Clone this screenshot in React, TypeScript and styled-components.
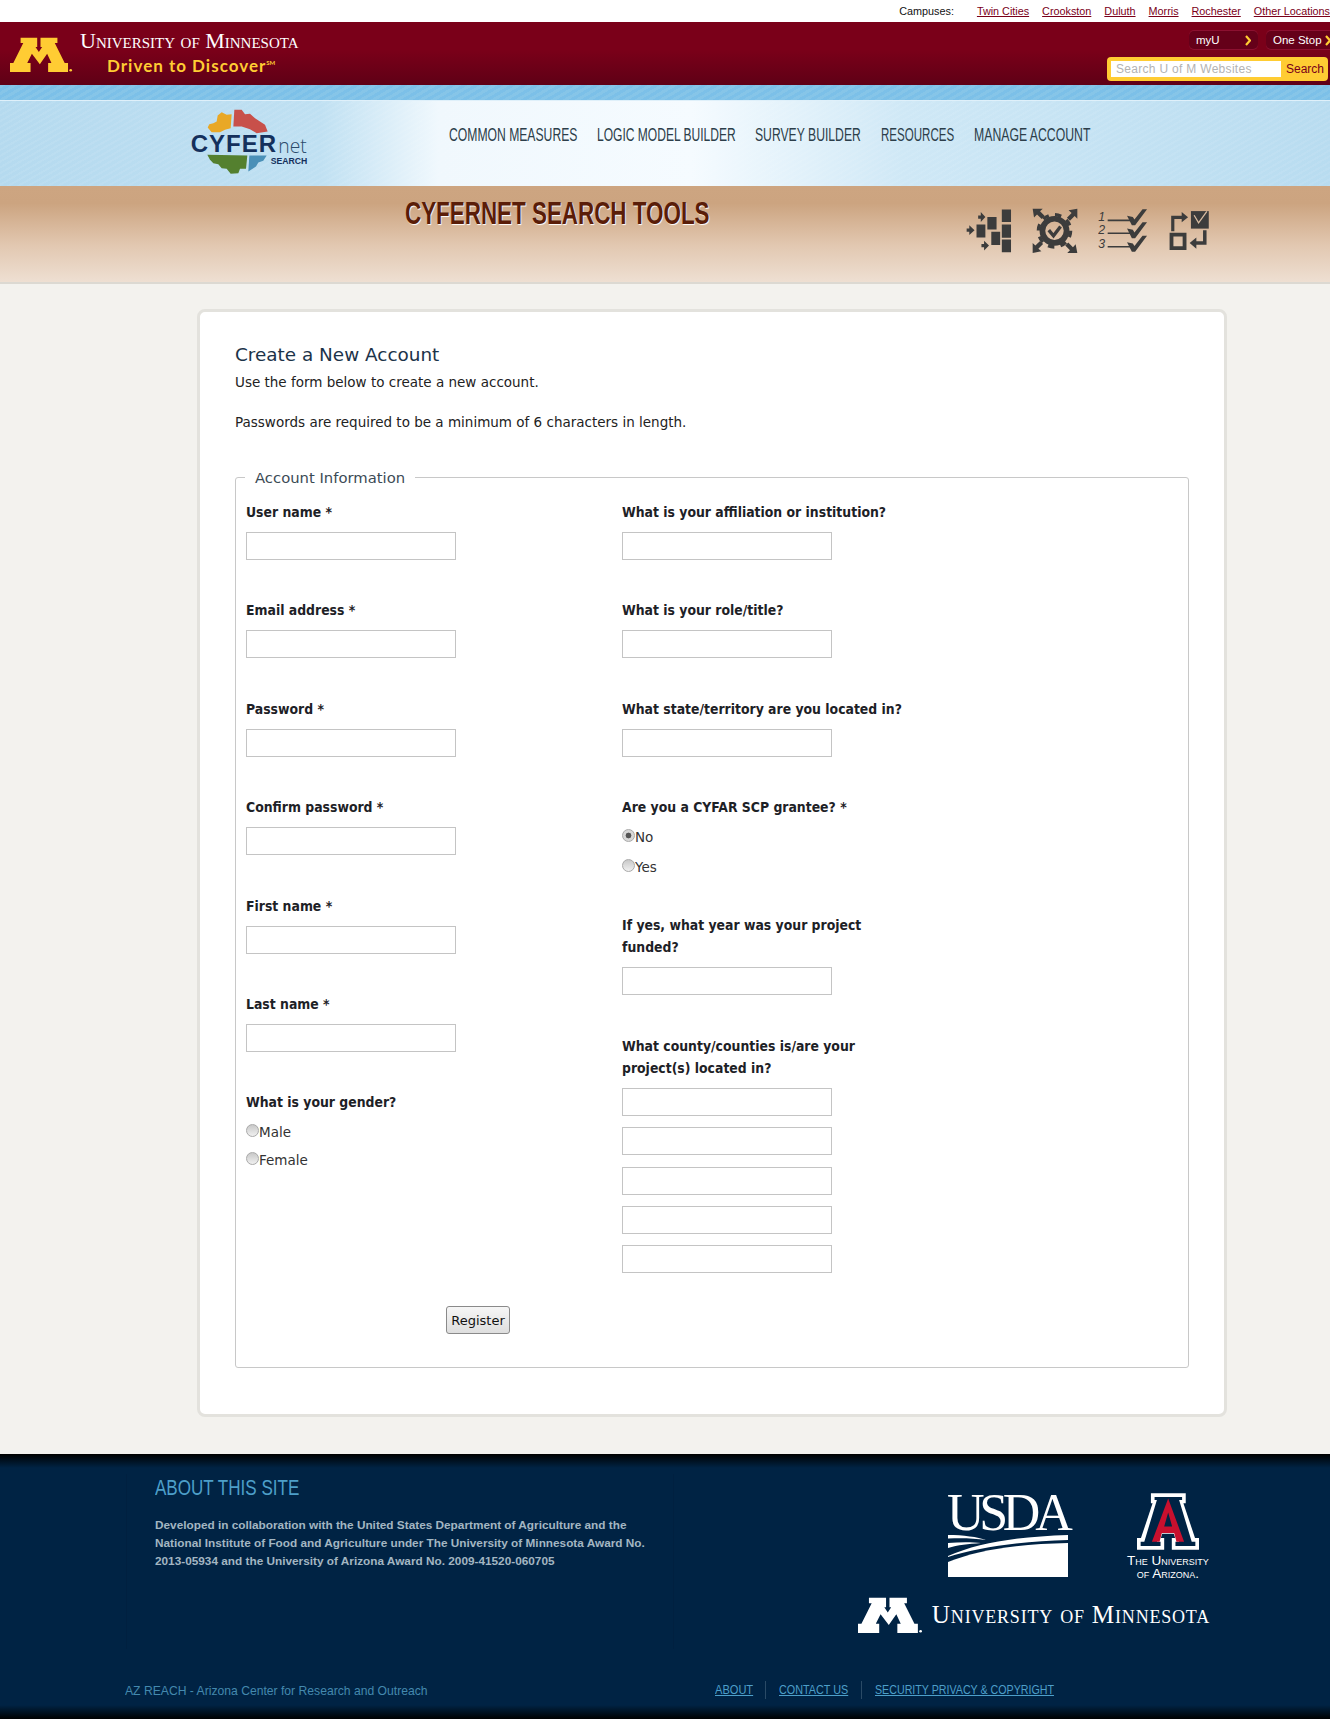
import React from "react"
import styled, { createGlobalStyle } from "styled-components"

const GlobalStyle = createGlobalStyle`
  html, body { margin: 0; padding: 0; background: #f3f2ee; }
  body { font-family: "DejaVu Sans", sans-serif; color: #1d2b36; }
  * { box-sizing: border-box; }
`

const sans = `"Liberation Sans", sans-serif`
const body = `"DejaVu Sans", "Open Sans", sans-serif`
const bodyBold = `"DejaVu Sans Condensed", "Open Sans", sans-serif`
const serif = `"Liberation Serif", serif`

// condensed DIN look: no narrow family is installed, so text gets squeezed
const Squeeze = styled.span<{ $w: number; $s: number }>`
  display: inline-block;
  width: ${p => p.$w}px;
  white-space: nowrap;
  transform: scaleX(${p => p.$s});
  transform-origin: left center;
`

/* top strip */
const CampusBar = styled.div`
  height: 22px;
  background: #fff;
  display: flex;
  justify-content: flex-end;
  align-items: center;
  overflow: hidden;
  white-space: nowrap;
  font-family: ${sans};
  font-size: 10.8px;
`
const CampusLabel = styled.span`
  color: #111;
  margin-right: 23px;
`
const CampusLink = styled.a`
  color: #7a0019;
  text-decoration: underline;
  margin-left: 13px;
  &:first-of-type { margin-left: 0; }
`

/* maroon */
const Maroon = styled.div`
  height: 63px;
  background: linear-gradient(#7a0019 0%, #7a0019 45%, #5f0016 100%);
  display: flex;
  justify-content: space-between;
  overflow: hidden;
`
const Brand = styled.div`
  display: flex;
  padding: 15px 0 0 10px;
`
const BrandText = styled.div`
  margin-left: 7px;
  margin-top: -8px;
`
const UmnName = styled.div`
  font-family: ${serif};
  font-variant: small-caps;
  color: #fff;
  font-size: 22px;
  line-height: 24px;
  white-space: nowrap;
`
const Tagline = styled.div`
  font-family: "Lato", sans-serif;
  font-weight: 700;
  color: #ffcc33;
  font-size: 17px;
  letter-spacing: 1px;
  line-height: 22px;
  margin: 2px 0 0 27px;
  white-space: nowrap;
  sup { font-size: 6px; vertical-align: 7px; line-height: 0; letter-spacing: 0; }
`
const UmnTools = styled.div`
  width: 223px;
  flex-shrink: 0;
  padding-top: 9px;
`
const QuickLinks = styled.div`
  display: flex;
  gap: 8px;
  padding-left: 82px;
`
const QuickLink = styled.a<{ $wide?: boolean }>`
  display: flex;
  justify-content: space-between;
  align-items: center;
  flex-shrink: 0;
  width: ${p => (p.$wide ? "70px" : "69px")};
  height: 18px;
  padding: 0 ${p => (p.$wide ? "5px" : "7px")} 0 7px;
  border-radius: 5px;
  background: #650019;
  box-shadow: 0 -1px 0 #8c1030, 0 1px 0 #8c1030;
  color: #fff;
  font-family: ${sans};
  font-size: 11.5px;
  white-space: nowrap;
`
const Chevron = styled.svg`
  width: 6px;
  height: 11px;
  flex-shrink: 0;
`
const SearchBox = styled.div`
  display: flex;
  align-items: center;
  height: 24px;
  width: 221px;
  margin-top: 8px;
  padding-left: 4px;
  background: #ffcc33;
  border-radius: 4px;
`
const SearchField = styled.div`
  width: 170px;
  height: 16px;
  background: #fff;
  color: #b3b3b3;
  font-family: ${sans};
  font-size: 12px;
  line-height: 16px;
  padding-left: 5px;
  letter-spacing: 0.3px;
  white-space: nowrap;
`
const SearchGo = styled.span`
  margin-left: 5px;
  color: #7a0019;
  font-family: ${sans};
  font-size: 12px;
`

const BlueStrip = styled.div`
  height: 16px;
  background: repeating-linear-gradient(-30deg, #7cc0e8 0 3px, #86c5e8 3px 6px);
  border-bottom: 1px solid #dff0fa;
`

/* site nav */
const SiteNav = styled.div`
  height: 85px;
  display: flex;
  background:
    repeating-linear-gradient(-30deg, rgba(255,255,255,0.07) 0 2px, rgba(255,255,255,0) 2px 5px),
    linear-gradient(90deg, #b5daef 0%, #bfe0f2 24%, #f0f8fd 33%, #f5fbff 52%, #cfe8f6 68%, #b8dcf0 100%);
  box-shadow: 0 1px 0 #d8d4cc;
`
const LogoWrap = styled.div`
  width: 120px;
  margin-left: 190px;
  padding-top: 7px;
  flex-shrink: 0;
`
const NavLinks = styled.nav`
  display: flex;
  gap: 19.6px;
  margin-left: 139px;
  padding-top: 24px;
`
const NavLink = styled(Squeeze)`
  font-family: ${sans};
  font-size: 17.5px;
  color: #2c3e4a;
  line-height: 20px;
  height: 20px;
`

/* tan band */
const ToolBand = styled.div`
  height: 98px;
  background: linear-gradient(#cda581 0%, #cca480 18%, #e2c8b1 62%, #eedfd2 100%);
  border-bottom: 2px solid #dcd9d2;
  display: flex;
`
const BandTitle = styled.h1`
  margin: 9px 0 0 405px;
  height: 36px;
  font-family: ${sans};
  font-weight: 700;
  font-size: 32px;
  line-height: 36px;
  color: #5a1d08;
  text-shadow: 1px 1px 1px #fff;
  white-space: nowrap;
`
const BandIcons = styled.div`
  display: flex;
  margin-left: 255px;
  padding-top: 22px;
  gap: 20px;
`
const BandIcon = styled.svg`
  height: 46px;
  fill: #3c3c3c;
`

/* card */
const Main = styled.main`
  height: 1170px;
  padding: 25px 103px 0 197px;
`
const Card = styled.div`
  height: 1108px;
  background: #fff;
  border: 3px solid #e3e2dd;
  border-radius: 8px;
  padding: 29px 35px 0 35px;
`
const PageTitle = styled.h2`
  margin: 0;
  font-family: ${body};
  font-weight: 400;
  font-size: 18.4px;
  line-height: 28px;
  color: #1c3349;
`
const Intro = styled.p`
  margin: 2.6px 0 0;
  font-family: ${body};
  font-size: 13.5px;
  line-height: 20px;
  color: #222;
`
const Passwords = styled(Intro)`
  margin-top: 20.4px;
`
const Fieldset = styled.fieldset`
  margin: 36px 0 0;
  height: 900px;
  padding: 0 10px;
  border: 1px solid #c8c8c8;
  border-radius: 3px;
`
const Legend = styled.legend`
  margin-left: -1px;
  padding: 0 10px;
  font-family: ${body};
  font-size: 14.8px;
  line-height: 20px;
  color: #3b4a55;
`
const Columns = styled.div`
  display: flex;
  margin-top: 13px;
`
const Column = styled.div<{ $width: number }>`
  width: ${p => p.$width}px;
  flex-shrink: 0;
`
const Field = styled.div<{ $after?: number }>`
  margin-bottom: ${p => p.$after ?? 39.4}px;
`
const Label = styled.label`
  display: block;
  font-family: ${bodyBold};
  font-weight: 700;
  font-size: 13.85px;
  line-height: 22px;
  color: #1d2126;
  margin-bottom: 9px;
`
const TextInput = styled.input`
  display: block;
  width: 210px;
  height: 28px;
  padding: 0 4px;
  border: 1px solid #c4c4c4;
  background: #fff;
  outline: none;
`
const StackInput = styled(TextInput)`
  margin-bottom: 11.4px;
`
const RadioRow = styled.label<{ $after: number }>`
  display: flex;
  align-items: center;
  height: 20px;
  margin-bottom: ${p => p.$after}px;
  font-family: ${body};
  font-size: 13.5px;
  color: #333;
`
const RadioDot = styled.span<{ $on?: boolean }>`
  width: 13px;
  height: 13px;
  border-radius: 50%;
  margin-top: -3px;
  border: 1px solid #a9a9a9;
  background: ${p =>
    p.$on
      ? "radial-gradient(circle, #555 0 2.6px, #d8d8d8 3.2px)"
      : "linear-gradient(#c8c8c8, #f0f0f0)"};
`
const RegisterRow = styled.div`
  margin: 33px 0 0 200px;
`
const RegisterButton = styled.button`
  width: 64px;
  height: 28px;
  padding: 0;
  font-family: ${body};
  font-size: 13px;
  color: #111;
  background: linear-gradient(#f6f6f6, #dedede);
  border: 1px solid #8a8a8a;
  border-radius: 3px;
`

/* footer */
const Footer = styled.footer`
  height: 265px;
  background:
    linear-gradient(#000 0, rgba(0,0,0,0) 14px),
    linear-gradient(0deg, #000 0, rgba(0,0,0,0) 14px),
    #002344;
  display: flex;
  flex-direction: column;
`
const FooterTop = styled.div`
  height: 218px;
  display: flex;
  justify-content: space-between;
  padding: 0 120px 0 126px;
`
const AboutPanel = styled.div`
  width: 548px;
  height: 175px;
  margin-top: 20px;
  padding: 1px 0 0 28px;
  border-left: 1px solid #002040;
  border-right: 1px solid #002040;
`
const AboutTitle = styled.h3`
  margin: 0 0 15px;
  font-family: ${sans};
  font-weight: 400;
  font-size: 22px;
  line-height: 26px;
  color: #4d9fc9;
`
const AboutText = styled.p`
  margin: 0;
  font-family: ${sans};
  font-weight: 700;
  font-size: 11.8px;
  line-height: 18px;
  color: #a3b6c2;
  white-space: nowrap;
`
const FooterLogos = styled.div`
  width: 350px;
  padding-top: 39px;
  display: flex;
  flex-direction: column;
  align-items: flex-end;
`
const LogoRow = styled.div`
  display: flex;
  align-items: flex-start;
`
const UsdaMark = styled.div`
  width: 120px;
  margin-right: 58px;
  margin-top: 2px;
`
const UsdaWord = styled.div`
  font-family: ${serif};
  color: #fff;
  font-size: 52px;
  line-height: 36px;
  letter-spacing: -5.3px;
  margin-left: -1px;
  height: 40px;
  white-space: nowrap;
`
const WaveArt = styled.svg`
  display: block;
`
const ArizonaMark = styled.div`
  width: 84px;
  display: flex;
  flex-direction: column;
  align-items: center;
  font-family: ${sans};
  font-variant: small-caps;
  color: #fff;
  font-size: 13.5px;
  line-height: 12.5px;
  white-space: nowrap;
`
const ArizonaArt = styled.svg`
  margin-bottom: 5px;
`
const UmnFoot = styled.div`
  display: flex;
  align-items: center;
  margin-top: 17px;
`
const UmnFootName = styled.div`
  font-family: ${serif};
  font-variant: small-caps;
  color: #fff;
  font-size: 25.2px;
  letter-spacing: 0.8px;
  margin-left: 9px;
  white-space: nowrap;
`
const FooterBottom = styled.div`
  display: flex;
  padding: 9px 0 0 125px;
  align-items: center;
`
const AzReach = styled.div`
  width: 590px;
  color: #4489ae;
  font-family: ${sans};
  font-size: 13.5px;
`
const FootLink = styled.a`
  color: #4d9fc9;
  font-family: ${sans};
  font-size: 13.5px;
  padding: 0 13px;
  line-height: 18px;
  border-right: 1px solid #2a4a66;
  &:last-child { border-right: 0; }
  &:first-of-type { padding-left: 0; }
`
const FootLinkText = styled(Squeeze)`
  text-decoration: underline;
`

/* drawings */
const BlockM = ({ fill, width, height }: { fill: string; width: number; height: number }) => (
  <svg width={width} height={height} viewBox="0 0 190 105" style={{ flexShrink: 0 }}>
    <path
      fill={fill}
      d="M32 2H82V30H77L87 45L97 30H92V2H143V18H135L165 78H175V105H115V78H125L112 50L90 82L66 50L52 78H62V105H0V78H10L40 18H32Z"
    />
    <circle cx="183" cy="100" r="4" fill={fill} />
  </svg>
)

const CyferLogo = () => (
  <svg width="120" height="67" viewBox="60 40 360 200">
    <path fill="#e9a826" d="M113 98L118 88L130 85L140 80L143 62L155 52L170 60L185 58L182 100L165 105L150 112L125 112Z" />
    <path fill="#c8504a" d="M190 95L193 45L215 45L225 58L240 57L255 70L270 80L285 90L293 110L260 115L240 103L215 95Z" />
    <path fill="#54802f" d="M112 180L232 182L228 222L210 222L205 235L182 237L170 222L155 220L145 208L130 205L120 195Z" />
    <path fill="#4a90b8" d="M238 182L290 182L280 198L265 203L258 215L235 230Z" />
    <text x="62" y="172" fontFamily="'Liberation Sans', sans-serif" fontWeight="700" fontSize="72" letterSpacing="3" fill="#14305c">CYFER</text>
    <text x="325" y="175" fontFamily="'Open Sans', sans-serif" fontWeight="300" fontSize="58" fill="#2b4a6a">net</text>
    <text x="302" y="208" fontFamily="'Liberation Sans', sans-serif" fontWeight="700" fontSize="26" fill="#14305c">SEARCH</text>
  </svg>
)

const ArizonaA = () => (
  <ArizonaArt width="62" height="57" viewBox="0 0 187 170">
    <path fill="#fff" d="M42 0H147V30H140L175 135H187V170H105V135H115L111 122H76L72 135H82V170H0V135H12L47 30H42Z" />
    <path fill="#002344" d="M53 11H136V20H127L165 146H176V159H116V146H127L119 111H68L60 146H71V159H11V146H22L60 20H53Z" />
    <path fill="#c8102e" fillRule="evenodd" d="M94 16L142 146H119L112 120H75L68 146H45ZM94 58L82 100H106Z" />
  </ArizonaArt>
)

const Wave = () => (
  <WaveArt width="120" height="42" viewBox="0 0 120 42">
    <path fill="#fff" d="M0 0C15 0 30 2 38 5 25 3 12 3 0 3.5Z" />
    <path fill="#fff" d="M0 8C12 7 24 7 33 8 20 9 10 10 0 13Z" />
    <path fill="#fff" d="M0 21C30 8 70 1.500 120 0V5C75 6 30 12 0 22Z" />
    <path fill="#fff" d="M0 42V27C30 15 70 9 120 8V42Z" />
  </WaveArt>
)

const ChevronIcon = () => (
  <Chevron viewBox="0 0 6 11">
    <path d="M1 1L5 5.500L1 10" fill="none" stroke="#ffcc33" strokeWidth="2.200" />
  </Chevron>
)

const BlocksIcon = () => (
  <BandIcon width="46" viewBox="48 40 140 135">
    <path d="M157 42h28v38h-28zM157 88h28v40h-28zM157 133h28v39h-28zM113 65h28v38h-28zM125 110h27v40h-27zM80 88h27v39H80z" />
    <path d="M85 60h8V50l14 15-14 15V70h-8zM50 100h8V90l16 15-16 15v-10h-8zM95 147h8v-10l15 15-15 15v-10h-8z" />
  </BandIcon>
)

const GearIcon = () => (
  <BandIcon width="46" viewBox="245 40 137 133">
    <circle cx="312" cy="106" r="36" fill="none" stroke="#3c3c3c" strokeWidth="17" />
    <circle cx="312" cy="106" r="48" fill="none" stroke="#3c3c3c" strokeWidth="10" strokeDasharray="19 18.700" />
    <path d="M295 104l14 17 21-28" fill="none" stroke="#3c3c3c" strokeWidth="10" />
    <path d="M247 40h30l-8 8 14 14-9 9-14-14-9 9zM380 40v30l-8-8-14 14-9-9 14-14-9-8zM247 172v-30l8 8 14-14 9 9-14 14 9 8zM380 172h-30l8-8-14-14 9-9 14 14 8-9z" />
  </BandIcon>
)

const ListIcon = () => (
  <BandIcon width="50" viewBox="440 40 155 135">
    <text x="441" y="76" fontFamily="'Liberation Sans', sans-serif" fontStyle="italic" fontSize="38">1</text>
    <text x="441" y="118" fontFamily="'Liberation Sans', sans-serif" fontStyle="italic" fontSize="38">2</text>
    <text x="441" y="160" fontFamily="'Liberation Sans', sans-serif" fontStyle="italic" fontSize="38">3</text>
    <path d="M470 72h75v5h-75zM470 112h75v5h-75zM470 154h75v5h-75z" />
    <path d="M530 60L548 64L553 72L578 40H592L555 90H545Z" />
    <path d="M530 100L548 104L553 112L578 80H592L555 130H545Z" />
    <path d="M530 142L548 146L553 154L578 122H592L555 172H545Z" />
  </BandIcon>
)

const FlowIcon = () => (
  <BandIcon width="43" viewBox="650 40 135 135">
    <path d="M722 45h56v55h-56z" />
    <path d="M732 58l14 24 26-36" fill="none" stroke="#d9bda3" strokeWidth="4" />
    <path fillRule="evenodd" d="M655 113h53v54h-53zM667 125v30h29v-30z" />
    <path d="M660 108V60h33V48l20 16-20 16V70h-23v38zM760 105h11v46h-32v12l-21-18 21-17v12h21z" />
  </BandIcon>
)

const leftFields = ["User name *", "Email address *", "Password *", "Confirm password *", "First name *", "Last name *"]
const rightFields = ["What is your affiliation or institution?", "What is your role/title?", "What state/territory are you located in?"]
const campuses = ["Twin Cities", "Crookston", "Duluth", "Morris", "Rochester", "Other Locations"]
const navItems = [
  { label: "COMMON MEASURES", w: 128, s: 0.695 },
  { label: "LOGIC MODEL BUILDER", w: 139, s: 0.688 },
  { label: "SURVEY BUILDER", w: 106, s: 0.696 },
  { label: "RESOURCES", w: 74, s: 0.66 },
  { label: "MANAGE ACCOUNT", w: 116, s: 0.7 },
]
const footLinks = [
  { label: "ABOUT", w: 37, s: 0.82 },
  { label: "CONTACT US", w: 69, s: 0.8 },
  { label: "SECURITY PRIVACY & COPYRIGHT", w: 179, s: 0.79 },
]

export default function App() {
  return (
    <>
      <GlobalStyle />
      <CampusBar>
        <CampusLabel>Campuses:</CampusLabel>
        {campuses.map(c => <CampusLink key={c}>{c}</CampusLink>)}
      </CampusBar>

      <Maroon>
        <Brand>
          <BlockM fill="#ffcc33" width={63} height={35} />
          <BrandText>
            <UmnName>University of Minnesota</UmnName>
            <Tagline>Driven to Discover<sup>SM</sup></Tagline>
          </BrandText>
        </Brand>
        <UmnTools>
          <QuickLinks>
            <QuickLink>myU <ChevronIcon /></QuickLink>
            <QuickLink $wide>One Stop <ChevronIcon /></QuickLink>
          </QuickLinks>
          <SearchBox>
            <SearchField>Search U of M Websites</SearchField>
            <SearchGo>Search</SearchGo>
          </SearchBox>
        </UmnTools>
      </Maroon>
      <BlueStrip />

      <SiteNav>
        <LogoWrap><CyferLogo /></LogoWrap>
        <NavLinks>
          {navItems.map(n => <NavLink key={n.label} $w={n.w} $s={n.s}>{n.label}</NavLink>)}
        </NavLinks>
      </SiteNav>

      <ToolBand>
        <BandTitle><Squeeze $w={306} $s={0.7}>CYFERNET SEARCH TOOLS</Squeeze></BandTitle>
        <BandIcons>
          <BlocksIcon />
          <GearIcon />
          <ListIcon />
          <FlowIcon />
        </BandIcons>
      </ToolBand>

      <Main>
        <Card>
          <PageTitle>Create a New Account</PageTitle>
          <Intro>Use the form below to create a new account.</Intro>
          <Passwords>Passwords are required to be a minimum of 6 characters in length.</Passwords>
          <Fieldset>
            <Legend>Account Information</Legend>
            <Columns>
              <Column $width={376}>
                {leftFields.map(f => (
                  <Field key={f}>
                    <Label>{f}</Label>
                    <TextInput />
                  </Field>
                ))}
                <Field>
                  <Label>What is your gender?</Label>
                  <RadioRow $after={8}><RadioDot />Male</RadioRow>
                  <RadioRow $after={0}><RadioDot />Female</RadioRow>
                </Field>
              </Column>
              <Column $width={290}>
                {rightFields.map(f => (
                  <Field key={f}>
                    <Label>{f}</Label>
                    <TextInput />
                  </Field>
                ))}
                <Field $after={37.5}>
                  <Label>Are you a CYFAR SCP grantee? *</Label>
                  <RadioRow $after={9.6}><RadioDot $on />No</RadioRow>
                  <RadioRow $after={0}><RadioDot />Yes</RadioRow>
                </Field>
                <Field $after={39.5}>
                  <Label>If yes, what year was your project funded?</Label>
                  <TextInput />
                </Field>
                <Field $after={0}>
                  <Label>What county/counties is/are your project(s) located in?</Label>
                  <StackInput />
                  <StackInput />
                  <StackInput />
                  <StackInput />
                  <TextInput />
                </Field>
              </Column>
            </Columns>
            <RegisterRow>
              <RegisterButton>Register</RegisterButton>
            </RegisterRow>
          </Fieldset>
        </Card>
      </Main>

      <Footer>
        <FooterTop>
          <AboutPanel>
            <AboutTitle><Squeeze $w={145} $s={0.775}>ABOUT THIS SITE</Squeeze></AboutTitle>
            <AboutText>Developed in collaboration with the United States Department of Agriculture and the</AboutText>
            <AboutText>National Institute of Food and Agriculture under The University of Minnesota Award No.</AboutText>
            <AboutText>2013-05934 and the University of Arizona Award No. 2009-41520-060705</AboutText>
          </AboutPanel>
          <FooterLogos>
            <LogoRow>
              <UsdaMark>
                <UsdaWord>USDA</UsdaWord>
                <Wave />
              </UsdaMark>
              <ArizonaMark>
                <ArizonaA />
                <div>The University</div>
                <div>of Arizona.</div>
              </ArizonaMark>
            </LogoRow>
            <UmnFoot>
              <BlockM fill="#fff" width={65} height={36} />
              <UmnFootName>University of Minnesota</UmnFootName>
            </UmnFoot>
          </FooterLogos>
        </FooterTop>
        <FooterBottom>
          <AzReach><Squeeze $w={303} $s={0.9}>AZ REACH - Arizona Center for Research and Outreach</Squeeze></AzReach>
          {footLinks.map(l => (
            <FootLink key={l.label}><FootLinkText $w={l.w} $s={l.s}>{l.label}</FootLinkText></FootLink>
          ))}
        </FooterBottom>
      </Footer>
    </>
  )
}
